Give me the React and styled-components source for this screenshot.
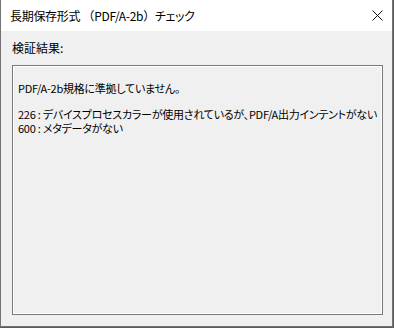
import React from "react";
import styled, { createGlobalStyle } from "styled-components";

const Global = createGlobalStyle`
  html, body { margin: 0; padding: 0; }
  body {
    background: #5a5a5a;
    width: 394px;
    height: 328px;
    overflow: hidden;
    font-family: "Noto Sans CJK JP", "Noto Sans", sans-serif;
  }
`;

const Window = styled.div`
  box-sizing: border-box;
  width: 393px;
  height: 327px;
  display: flex;
  flex-direction: column;
  background: #f0f0f0;
  border: 1px solid #747474;
  border-top: none;
`;

const TitleBar = styled.div`
  height: 31px;
  flex: none;
  background: #ffffff;
  display: flex;
  align-items: center;
  justify-content: space-between;
  padding: 0 9px 0 9px;
  box-sizing: border-box;
`;

const Title = styled.div`
  font-size: 12px;
  line-height: 16px;
  color: #000;
  font-feature-settings: "palt";
  letter-spacing: -0.3px;
`;

const Paren = styled.span`
  font-feature-settings: normal;
`;

const CloseButton = styled.div`
  width: 12px;
  height: 12px;
  display: flex;
  align-items: center;
  justify-content: center;
`;

const Content = styled.div`
  flex: 1;
  display: flex;
  flex-direction: column;
  padding: 9px 9px 11px 11px;
  min-height: 0;
`;

const Label = styled.div`
  font-size: 12px;
  line-height: 16px;
  color: #000;
  margin-bottom: 9px;
`;

const ResultBox = styled.div`
  flex: 1;
  border: 1px solid #7a7a7a;
  box-shadow: inset 0 0 0 1px #ffffff;
  background: #f0f0f0;
  padding: 16px 4px 0 5px;
  font-size: 11px;
  color: #000;
  font-feature-settings: "palt";
  letter-spacing: -0.25px;
`;

const Line = styled.div`
  line-height: ${(p) => p.$lh || 13}px;
  margin-top: ${(p) => p.$mt || 0}px;
  white-space: nowrap;
`;

export default function App() {
  return (
    <>
      <Global />
      <Window>
        <TitleBar>
          <Title>
            長期保存形式 <Paren>（</Paren>PDF/A-2b<Paren>）</Paren>チェック
          </Title>
          <CloseButton>
            <svg width="11" height="11" viewBox="0 0 11 11">
              <path d="M0.5 0.5 L10.5 10.5 M10.5 0.5 L0.5 10.5" stroke="#111" strokeWidth="1" fill="none" />
            </svg>
          </CloseButton>
        </TitleBar>
        <Content>
          <Label>検証結果:</Label>
          <ResultBox>
            <Line>PDF/A-2b規格に準拠していません。</Line>
            <Line $mt={12} $lh={14}>226 : デバイスプロセスカラーが使用されているが、PDF/A出力インテントがない</Line>
            <Line $lh={14}>600 : メタデータがない</Line>
          </ResultBox>
        </Content>
      </Window>
    </>
  );
}
